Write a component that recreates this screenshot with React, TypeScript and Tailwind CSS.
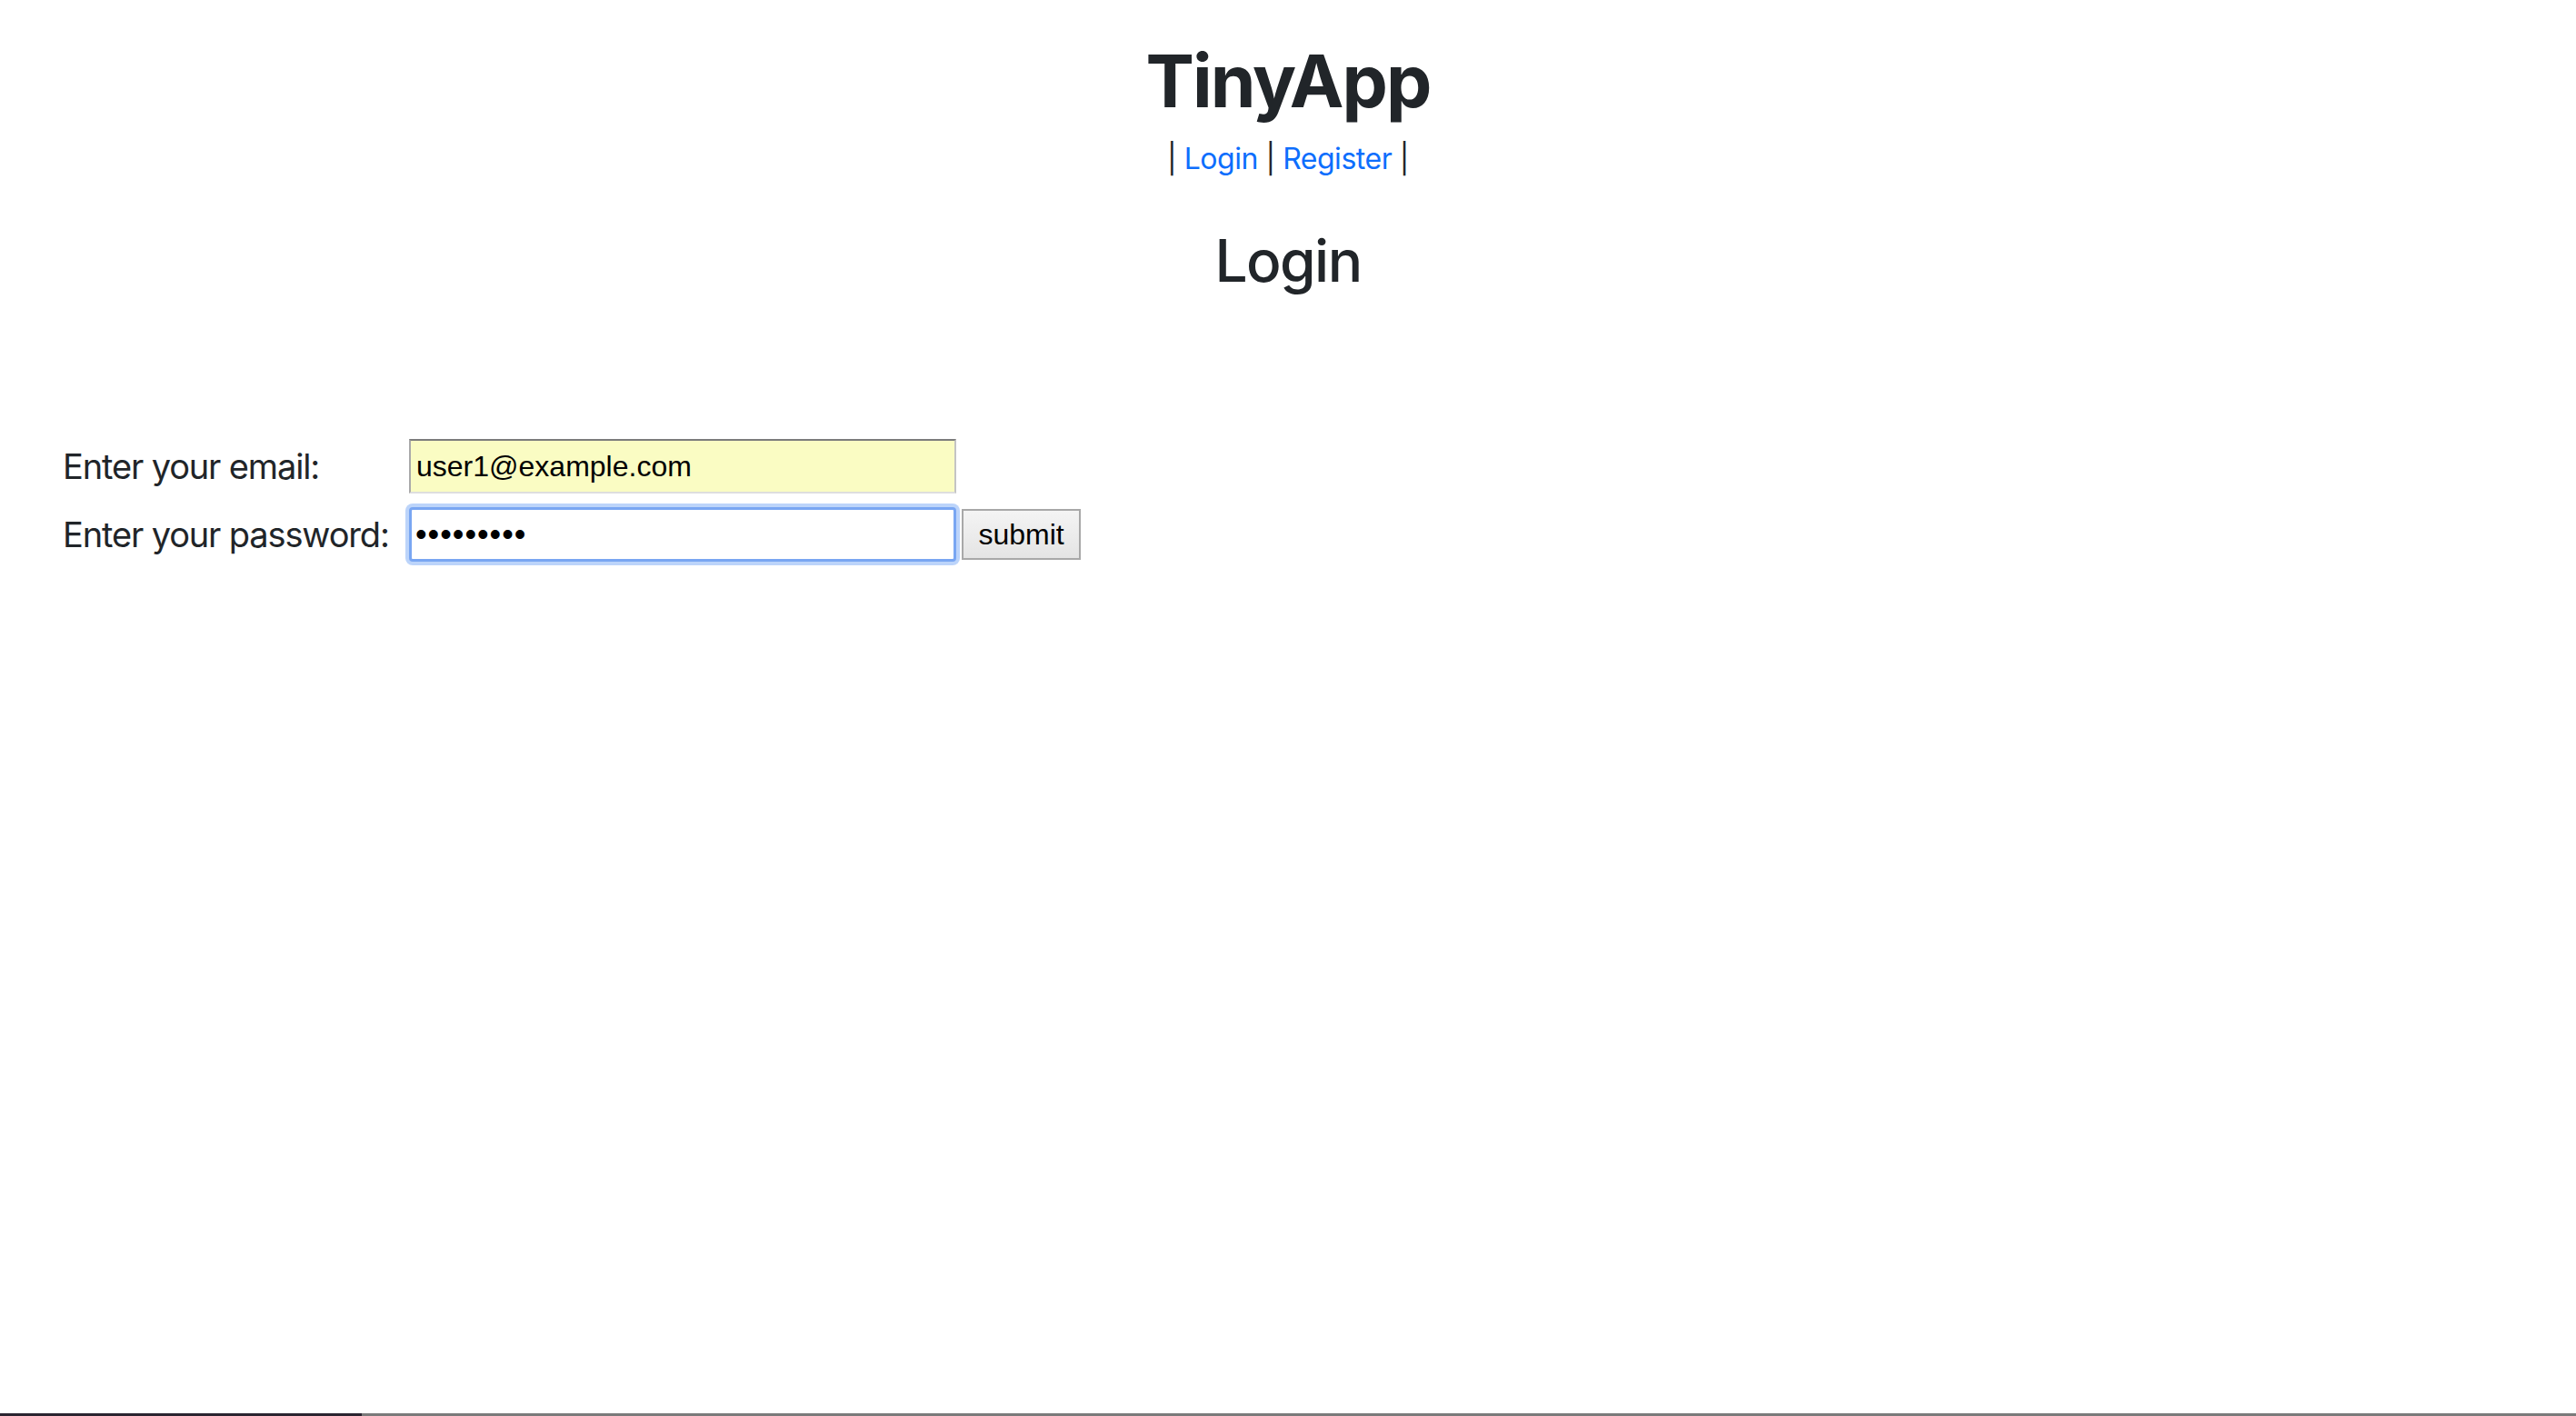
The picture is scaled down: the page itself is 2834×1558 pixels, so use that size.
export default function App() {
  return (
    <div className="flex min-h-[1558px] flex-col bg-white font-['Inter','Liberation_Sans',sans-serif] text-[#212529]">
      {/* Header */}
      <header className="flex flex-col items-center pt-[41px]">
        <h1 className="text-[80px] font-bold leading-[96px] tracking-[-0.025em]">TinyApp</h1>
        <nav className="mt-[14px] text-[32px] leading-[48px] tracking-[-0.015em]">
          |{" "}
          <a href="#" className="text-[#0d6efd]">
            Login
          </a>{" "}
          |{" "}
          <a href="#" className="text-[#0d6efd]">
            Register
          </a>{" "}
          |
        </nav>
        <h2 className="mt-[49px] text-[64px] font-medium leading-[77px] tracking-[-0.025em]">Login</h2>
      </header>

      {/* Form */}
      <form className="mt-[158px] grid w-max grid-cols-[381px_602px_auto] items-center gap-y-[15px] pl-[69px]">
        <label className="whitespace-nowrap text-[38px] leading-[60px] tracking-[-0.03em]">Enter your email:</label>
        <input
          type="email"
          defaultValue="user1@example.com"
          className="h-[60px] w-[602px] border-2 border-t-[#7c7c7c] border-r-[#c4c4c4] border-b-[#dedede] border-l-[#a9a9a9] bg-[#fafcc3] pl-[6px] font-['Liberation_Sans',Arial,sans-serif] text-[32px] text-black outline-none"
        />
        <div />
        <label className="whitespace-nowrap text-[38px] leading-[60px] tracking-[-0.03em]">Enter your password:</label>
        <input
          type="password"
          defaultValue="secret123"
          className="h-[60px] w-[602px] rounded-[4px] border-[3px] border-[#79a6f2] bg-white pl-[4px] font-['Liberation_Sans',Arial,sans-serif] text-[36px] tracking-[1px] text-black shadow-[0_0_0_4px_#bcd4fa] outline-none"
        />
        <button
          type="button"
          className="ml-[6px] h-[56px] w-[131px] border-2 border-[#a8a8a8] bg-gradient-to-b from-[#f4f4f4] to-[#e4e4e4] font-['Liberation_Sans',Arial,sans-serif] text-[32px] leading-none text-black"
        >
          submit
        </button>
      </form>

      <div className="flex-1" />
      {/* window edge */}
      <div className="flex h-[3px]">
        <div className="w-[398px] bg-[#2a2430]" />
        <div className="flex-1 bg-[#7a7a7a]" />
      </div>
    </div>
  );
}
